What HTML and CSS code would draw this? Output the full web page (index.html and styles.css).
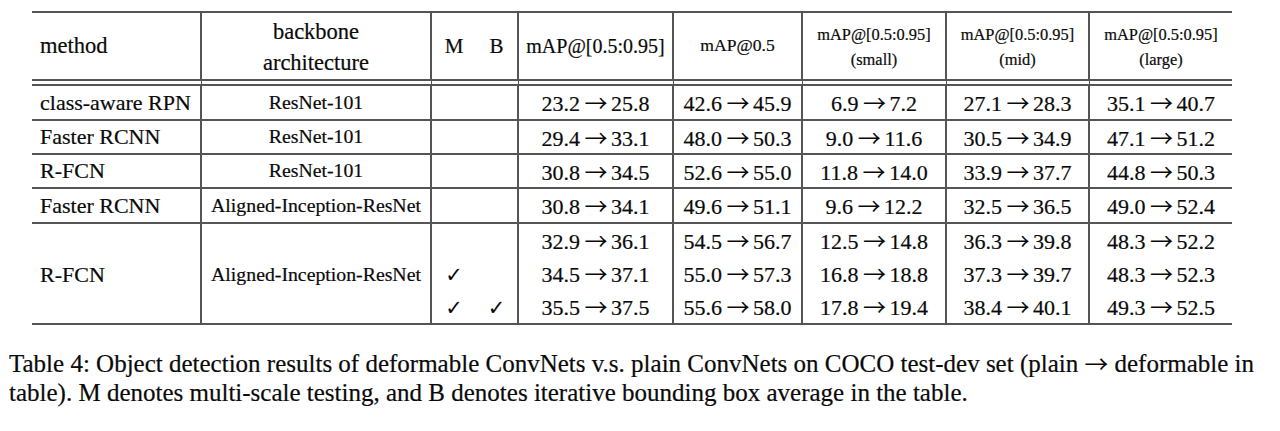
FILE: index.html
```html
<!DOCTYPE html>
<html lang="en">
<head>
<meta charset="utf-8">
<title>Table 4</title>
<link rel="stylesheet" href="styles.css">
</head>
<body>
<div class="page">
  <table class="results">
    <colgroup>
      <col class="c-method">
      <col class="c-backbone">
      <col class="c-m">
      <col class="c-b">
      <col class="c-map">
      <col class="c-map50">
      <col class="c-small">
      <col class="c-mid">
      <col class="c-large">
    </colgroup>
    <thead>
      <tr class="head">
        <th class="method h-method">method</th>
        <th class="backbone h-backbone">backbone<br>architecture</th>
        <th class="flag-m h-flag">M</th>
        <th class="flag-b h-flag">B</th>
        <th class="num h-map">mAP@[0.5:0.95]</th>
        <th class="num h-map50">mAP@0.5</th>
        <th class="num h-sub">mAP@[0.5:0.95]<br>(small)</th>
        <th class="num h-sub">mAP@[0.5:0.95]<br>(mid)</th>
        <th class="num last h-sub">mAP@[0.5:0.95]<br>(large)</th>
      </tr>
    </thead>
    <tbody>
      <tr class="row r1">
        <td class="method">class-aware RPN</td>
        <td class="backbone">ResNet-101</td>
        <td class="flag-m"></td>
        <td class="flag-b"></td>
        <td class="num">23.2 <span class="arr">→</span> 25.8</td>
        <td class="num">42.6 <span class="arr">→</span> 45.9</td>
        <td class="num">6.9 <span class="arr">→</span> 7.2</td>
        <td class="num">27.1 <span class="arr">→</span> 28.3</td>
        <td class="num last">35.1 <span class="arr">→</span> 40.7</td>
      </tr>
      <tr class="row r2">
        <td class="method">Faster RCNN</td>
        <td class="backbone">ResNet-101</td>
        <td class="flag-m"></td>
        <td class="flag-b"></td>
        <td class="num">29.4 <span class="arr">→</span> 33.1</td>
        <td class="num">48.0 <span class="arr">→</span> 50.3</td>
        <td class="num">9.0 <span class="arr">→</span> 11.6</td>
        <td class="num">30.5 <span class="arr">→</span> 34.9</td>
        <td class="num last">47.1 <span class="arr">→</span> 51.2</td>
      </tr>
      <tr class="row r3">
        <td class="method">R-FCN</td>
        <td class="backbone">ResNet-101</td>
        <td class="flag-m"></td>
        <td class="flag-b"></td>
        <td class="num">30.8 <span class="arr">→</span> 34.5</td>
        <td class="num">52.6 <span class="arr">→</span> 55.0</td>
        <td class="num">11.8 <span class="arr">→</span> 14.0</td>
        <td class="num">33.9 <span class="arr">→</span> 37.7</td>
        <td class="num last">44.8 <span class="arr">→</span> 50.3</td>
      </tr>
      <tr class="row r4">
        <td class="method">Faster RCNN</td>
        <td class="backbone">Aligned-Inception-ResNet</td>
        <td class="flag-m"></td>
        <td class="flag-b"></td>
        <td class="num">30.8 <span class="arr">→</span> 34.1</td>
        <td class="num">49.6 <span class="arr">→</span> 51.1</td>
        <td class="num">9.6 <span class="arr">→</span> 12.2</td>
        <td class="num">32.5 <span class="arr">→</span> 36.5</td>
        <td class="num last">49.0 <span class="arr">→</span> 52.4</td>
      </tr>
      <tr class="sub s1">
        <td class="method grp" rowspan="3">R-FCN</td>
        <td class="backbone grp" rowspan="3">Aligned-Inception-ResNet</td>
        <td class="flag-m"></td>
        <td class="flag-b"></td>
        <td class="num">32.9 <span class="arr">→</span> 36.1</td>
        <td class="num">54.5 <span class="arr">→</span> 56.7</td>
        <td class="num">12.5 <span class="arr">→</span> 14.8</td>
        <td class="num">36.3 <span class="arr">→</span> 39.8</td>
        <td class="num last">48.3 <span class="arr">→</span> 52.2</td>
      </tr>
      <tr class="sub s2">
        <td class="flag-m"><span class="check">✓</span></td>
        <td class="flag-b"></td>
        <td class="num">34.5 <span class="arr">→</span> 37.1</td>
        <td class="num">55.0 <span class="arr">→</span> 57.3</td>
        <td class="num">16.8 <span class="arr">→</span> 18.8</td>
        <td class="num">37.3 <span class="arr">→</span> 39.7</td>
        <td class="num last">48.3 <span class="arr">→</span> 52.3</td>
      </tr>
      <tr class="sub s3">
        <td class="flag-m"><span class="check">✓</span></td>
        <td class="flag-b"><span class="check">✓</span></td>
        <td class="num">35.5 <span class="arr">→</span> 37.5</td>
        <td class="num">55.6 <span class="arr">→</span> 58.0</td>
        <td class="num">17.8 <span class="arr">→</span> 19.4</td>
        <td class="num">38.4 <span class="arr">→</span> 40.1</td>
        <td class="num last">49.3 <span class="arr">→</span> 52.5</td>
      </tr>
    </tbody>
  </table>

  <p class="caption">
    <span class="cap-line cap-first">Table 4: Object detection results of deformable ConvNets v.s. plain ConvNets on COCO test-dev set (plain <span class="arr">→</span> deformable in</span>
    <span class="cap-line">table). M denotes multi-scale testing, and B denotes iterative bounding box average in the table.</span>
  </p>
</div>
</body>
</html>
```

FILE: styles.css
```css
html, body {
  margin: 0;
  padding: 0;
  background: #ffffff;
}

body {
  font-family: "Liberation Serif", "Times New Roman", serif;
  color: #0a0a0a;
  width: 1280px;
  height: 431px;
  overflow: hidden;
  -webkit-text-stroke: 0.2px #0a0a0a;
}

.page {
  padding-top: 11px;
}

/* ---------- table ---------- */
.results {
  margin-left: 32px;
  width: 1200px;
  table-layout: fixed;
  border-collapse: separate;
  border-spacing: 0;
  border-top: 2px solid #555;
  border-bottom: 2px solid #555;
}

.c-method { width: 170px; }
.c-backbone { width: 230px; }
.c-m { width: 44px; }
.c-b { width: 43px; }
.c-map { width: 155px; }
.c-map50 { width: 129px; }
.c-small { width: 144px; }
.c-mid { width: 143px; }
.c-large { width: 142px; }

.results th,
.results td {
  padding: 0;
  font-weight: normal;
  vertical-align: middle;
  text-align: center;
  white-space: nowrap;
  border-right: 2px solid #555;
  line-height: 1;
}

.results .flag-m { border-right: none; }
.results .last { border-right: none; }

.results th.method,
.results td.method {
  text-align: left;
  padding-left: 8px;
}

.results td.num {
  word-spacing: -1px;
}

/* arrow glyph: thin, about one em wide, like TeX's \rightarrow */
.arr {
  font-family: "Noto Sans CJK JP", "DejaVu Sans", sans-serif;
  font-size: 1.05em;
  line-height: 1;
  display: inline-block;
  margin-left: 0;
  margin-right: -1px;
  -webkit-text-stroke: 0;
  transform: translateY(1px);
}

/* header */
.head th {
  height: 65px;
  border-bottom: 7px double #555;
  font-size: 22.5px;
}

.results .h-backbone {
  line-height: 31px;
  padding-top: 1px;
}

.results .h-flag {
  font-size: 21px;
  padding-top: 1px;
}

.results .h-map {
  font-size: 20px;
}

.results .h-map50 {
  font-size: 17.6px;
}

.results .h-sub {
  font-size: 16.4px;
  line-height: 25px;
  padding-top: 1px;
}

/* body rows */
.row td {
  font-size: 22px;
  border-bottom: 2px solid #555;
}

.results .row td.backbone {
  font-size: 19.8px;
}

.r1 td { height: 33px; }
.r2 td { height: 32px; }
.r3 td { height: 32px; }
.r4 td { height: 33px; }

.sub td {
  font-size: 22px;
  height: 33px;
}

.results .sub td.grp {
  padding-top: 2px;
}

.results .sub td.backbone {
  font-size: 19.8px;
}

.check {
  font-family: "DejaVu Sans", sans-serif;
  font-size: 21px;
  display: inline-block;
  -webkit-text-stroke: 0;
  transform: translateY(1px);
}

/* ---------- caption ---------- */
.caption {
  margin: 25px 0 0 9px;
  width: 1245px;
  font-size: 25px;
  line-height: 28.5px;
}

.cap-line {
  display: block;
  white-space: nowrap;
}

.cap-first {
  word-spacing: -1px;
  text-align: justify;
  text-align-last: justify;
}

.caption .arr {
  font-size: 0.95em;
  margin: 0;
  transform: translateY(1px);
}
```
